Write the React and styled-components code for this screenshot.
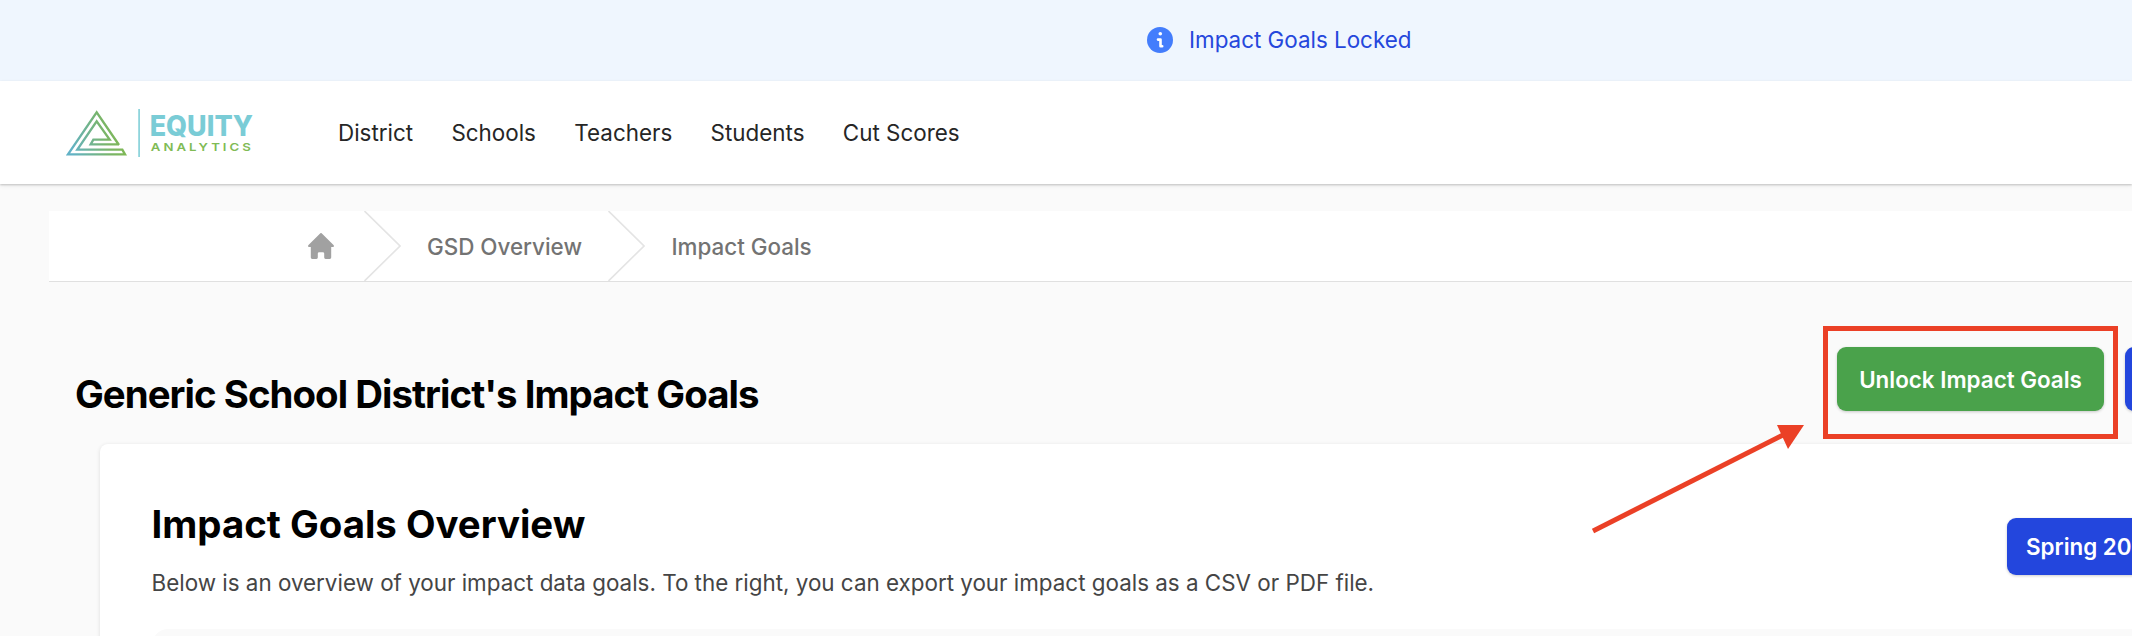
import React from "react";
import styled, { createGlobalStyle } from "styled-components";

const GlobalStyle = createGlobalStyle`
  * {
    box-sizing: border-box;
  }

  body {
    margin: 0;
    background: #fafafa;
    font-family: Inter, "Liberation Sans", sans-serif;
    overflow: hidden;
  }
`;

const navLinks = ["District", "Schools", "Teachers", "Students", "Cut Scores"];

function Logo() {
  return (
    <LogoSvg viewBox="0 0 720 270">
      <defs>
        <linearGradient id="mark" x1="0" y1="0.6" x2="1" y2="0.4">
          <stop offset="0" stopColor="#62b2c6" />
          <stop offset="0.65" stopColor="#7ab567" />
          <stop offset="1" stopColor="#80b94f" />
        </linearGradient>
      </defs>
      <path
        d="M207 165 L140 67 L54 193 H225 L217 179 H82 L140 94 L179 149 H130 L122 163 H207"
        fill="none"
        stroke="url(#mark)"
        strokeWidth="7"
      />
      <rect x="265" y="57" width="4.5" height="144" fill="#7accd6" />
      <LogoName x="299" y="137" textLength="310" lengthAdjust="spacingAndGlyphs">
        EQUITY
      </LogoName>
      <LogoTag
        x="252"
        y="183"
        textLength="250"
        transform="scale(1.2 1)"
      >
        ANALYTICS
      </LogoTag>
    </LogoSvg>
  );
}

function InfoIcon() {
  return (
    <svg width="26" height="26" viewBox="0 0 26 26">
      <circle cx="13" cy="13" r="13" fill="#437dfc" />
      <circle cx="13.3" cy="6.7" r="1.8" fill="#fff" />
      <path
        d="M11 12.6 H13.5 V19.3 H15.2"
        fill="none"
        stroke="#fff"
        strokeWidth="2.6"
        strokeLinecap="round"
        strokeLinejoin="round"
      />
    </svg>
  );
}

function HomeIcon() {
  return (
    <svg width="26" height="26" viewBox="0 0 26 26">
      <path
        d="M12.1 0.4 a1.3 1.3 0 0 1 1.8 0 L25.5 12 a1.2 1.2 0 0 1-.9 2.1 H23.2 V24.5 a1.4 1.4 0 0 1-1.4 1.4 H17.6 a1.4 1.4 0 0 1-1.4-1.4 V20.6 a1.4 1.4 0 0 0-1.4-1.4 H11.2 a1.4 1.4 0 0 0-1.4 1.4 V24.5 a1.4 1.4 0 0 1-1.4 1.4 H4.2 a1.4 1.4 0 0 1-1.4-1.4 V14.1 H1.4 A1.2 1.2 0 0 1 .5 12 Z"
        fill="#a1a1a1"
      />
    </svg>
  );
}

function Chevron({ gap }) {
  return (
    <ChevronSvg viewBox="0 0 37 70" $gap={gap}>
      <path d="M0.5 0 L36 35 L0.5 70" fill="none" stroke="#e4e4e4" strokeWidth="1.6" />
    </ChevronSvg>
  );
}

function App() {
  return (
    <Page>
      <GlobalStyle />
      <Banner>
        <InfoIcon />
        <BannerText>Impact Goals Locked</BannerText>
      </Banner>
      <Navbar>
        <Logo />
        <NavLinks>
          {navLinks.map((link) => (
            <NavLink key={link}>{link}</NavLink>
          ))}
        </NavLinks>
      </Navbar>
      <Breadcrumbs>
        <HomeIcon />
        <Chevron gap={30} />
        <Crumb>GSD Overview</Crumb>
        <Chevron gap={26.5} />
        <Crumb>Impact Goals</Crumb>
      </Breadcrumbs>
      <TitleRow>
        <Title>Generic School District's Impact Goals</Title>
        <Actions>
          <Button $color="#4aa24b" $height={64} $width={267}>
            Unlock Impact Goals
            <Highlight />
          </Button>
          <Button $color="#2346dd" $height={64} $width={200} />
        </Actions>
      </TitleRow>
      <Card>
        <CardHeader>
          <div>
            <CardTitle>Impact Goals Overview</CardTitle>
            <CardText>
              Below is an overview of your impact data goals. To the right, you
              can export your impact goals as a CSV or PDF file.
            </CardText>
          </div>
          <Button $color="#2346dd" $height={57} $width={200} $start>
            Spring 20
          </Button>
        </CardHeader>
        <Panel />
      </Card>
      <Arrow viewBox="0 0 212 110">
        <path d="M1 106 L192 9.5" stroke="#eb4026" strokeWidth="5" />
        <path d="M212 0 H185 L196 24 Z" fill="#eb4026" />
      </Arrow>
    </Page>
  );
}

export default App;

const Page = styled.div`
  position: relative;
  width: 2132px;
  height: 636px;
  overflow: hidden;
  background: #fafafa;
  color: #000;
`;

const Banner = styled.div`
  height: 81px;
  display: flex;
  align-items: center;
  gap: 16px;
  padding: 0 0 1px 1147px;
  background: #eff6fe;
`;

const BannerText = styled.span`
  margin-bottom: 2px;
  color: #2547dc;
  font-size: 22.4px;
  white-space: nowrap;
`;

const Navbar = styled.header`
  height: 103px;
  display: flex;
  align-items: center;
  padding-left: 50px;
  background: #fff;
  box-shadow: 0 1px 2px rgba(0, 0, 0, 0.2), 0 2px 5px rgba(0, 0, 0, 0.06);
`;

const LogoSvg = styled.svg`
  width: 240px;
  height: 90px;
  margin-top: 5px;
`;

const LogoName = styled.text`
  fill: #7accd6;
  font-size: 84px;
  font-weight: 800;
`;

const LogoTag = styled.text`
  fill: #80bb55;
  font-size: 33px;
  font-weight: 600;
`;

const NavLinks = styled.nav`
  display: flex;
  gap: 38.4px;
  margin-left: 48px;
`;

const NavLink = styled.a`
  color: #262626;
  font-size: 22.4px;
  white-space: nowrap;
`;

const Breadcrumbs = styled.div`
  height: 71px;
  display: flex;
  align-items: center;
  margin: 27px 0 0 49px;
  padding-left: 259px;
  background: #fff;
  border-bottom: 1px solid #e0e0e0;
`;

const ChevronSvg = styled.svg`
  width: 37px;
  height: 70px;
  margin: 0 26px 0 ${(props) => props.$gap}px;
`;

const Crumb = styled.span`
  color: #737373;
  font-size: 22.4px;
  font-weight: 500;
  white-space: nowrap;
`;

const TitleRow = styled.div`
  height: 162px;
  display: flex;
  justify-content: space-between;
  padding-left: 75px;
`;

const Title = styled.h1`
  margin: 88px 0 0;
  font-size: 38.4px;
  line-height: 48px;
  font-weight: 700;
  letter-spacing: -0.96px;
  white-space: nowrap;
`;

const Actions = styled.div`
  display: flex;
  gap: 21px;
  flex: none;
  width: 295px;
  margin-top: 65px;
`;

const Button = styled.div`
  position: relative;
  flex: none;
  display: flex;
  align-items: center;
  justify-content: ${(props) => (props.$start ? "flex-start" : "center")};
  width: ${(props) => props.$width}px;
  height: ${(props) => props.$height}px;
  padding-left: ${(props) => (props.$start ? "19px" : "0")};
  border-radius: 9px;
  background: ${(props) => props.$color};
  color: #fff;
  font-size: 22.4px;
  font-weight: 600;
  white-space: nowrap;
  box-shadow: 0 1px 3px rgba(0, 0, 0, 0.2);
`;

const Highlight = styled.span`
  position: absolute;
  top: -21px;
  right: -14px;
  bottom: -28px;
  left: -14px;
  border: 5px solid #eb4026;
`;

const Card = styled.section`
  height: 260px;
  margin-left: 100px;
  padding: 56px 0 0 51.5px;
  border-radius: 8px 0 0 0;
  background: #fff;
  box-shadow: 0 1px 4px rgba(0, 0, 0, 0.12);
`;

const CardHeader = styled.div`
  height: 129px;
  display: flex;
  justify-content: space-between;

  ${Button} {
    margin: 18px -75px 0 0;
  }
`;

const CardTitle = styled.h2`
  margin: 0;
  font-size: 38.4px;
  line-height: 48px;
  font-weight: 700;
  white-space: nowrap;
`;

const CardText = styled.p`
  margin: 19px 0 0;
  color: #454545;
  font-size: 22.4px;
  line-height: 32px;
  white-space: nowrap;
`;

const Panel = styled.div`
  height: 100px;
  border-radius: 16px 0 0 0;
  background: #fafafa;
`;

const Arrow = styled.svg`
  position: absolute;
  left: 1592px;
  top: 425px;
  width: 212px;
  height: 110px;
`;
